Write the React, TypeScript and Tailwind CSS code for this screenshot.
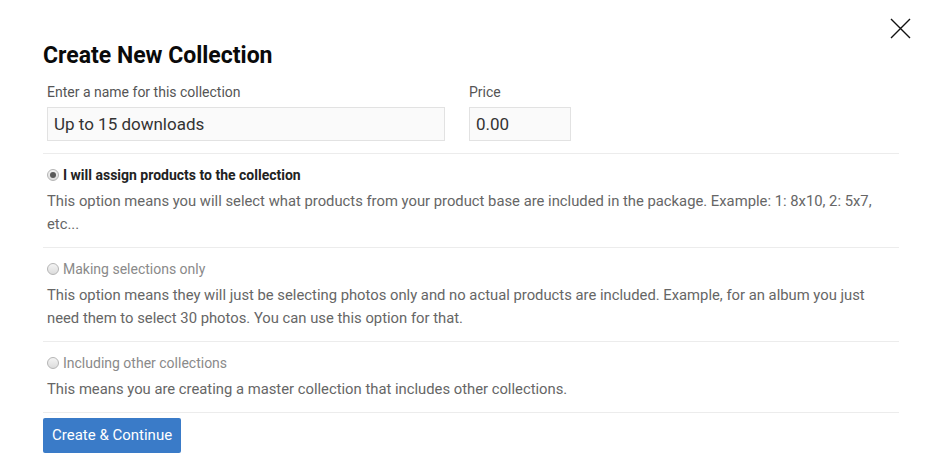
import React from "react";

function Radio({ checked }: { checked?: boolean }) {
  return (
    <span className="relative inline-flex h-[12px] w-[12px] shrink-0 items-center justify-center rounded-full border border-[#b5b5b5] bg-gradient-to-b from-[#f4f4f4] to-[#dcdcdc]">
      {checked && <span className="h-[6px] w-[6px] rounded-full bg-[#5a5a5a]" />}
    </span>
  );
}

function Option({
  label,
  desc,
  checked,
}: {
  label: string;
  desc: string;
  checked?: boolean;
}) {
  return (
    <div className="border-t border-[#ececec] pl-[4px] pt-[11px] pb-[11px]">
      <div className="flex h-[20px] items-center gap-[4px]">
        <Radio checked={checked} />
        <span
          className={
            checked
              ? "text-[14px] font-bold text-[#222]"
              : "text-[14px] text-[#8a8a8a]"
          }
        >
          {label}
        </span>
      </div>
      <p className="mt-[5px] text-[14.8px] leading-[23px] text-[#666]">{desc}</p>
    </div>
  );
}

export default function App() {
  return (
    <div
      className="relative h-[472px] w-[933px] bg-white"
      style={{ fontFamily: "Roboto, 'Liberation Sans', sans-serif" }}
    >
      <button className="absolute right-[22px] top-[18px] h-[21px] w-[21px] text-black">
        <svg viewBox="0 0 21 21" className="h-[21px] w-[21px]">
          <path d="M1 1 L20 20 M20 1 L1 20" stroke="#111" strokeWidth="1.4" fill="none" />
        </svg>
      </button>
      <div className="pl-[43px] pr-[34px] pt-[42px]">
        <h1 className="text-[23px] font-bold leading-[27px] text-[#0a0a0a]">Create New Collection</h1>
        <div className="mt-[15px] flex gap-[24px] pl-[4px] pb-[12px]">
          <div className="flex flex-col">
            <label className="text-[14px] leading-[17px] text-[#555]">Enter a name for this collection</label>
            <input
              readOnly
              value="Up to 15 downloads"
              className="mt-[6px] h-[34px] w-[398px] border border-[#e2e2e2] bg-[#fafafa] px-[6px] text-[17px] text-[#333] outline-none"
            />
          </div>
          <div className="flex flex-col">
            <label className="text-[14px] leading-[17px] text-[#555]">Price</label>
            <input
              readOnly
              value="0.00"
              className="mt-[6px] h-[34px] w-[102px] border border-[#e2e2e2] bg-[#fafafa] px-[6px] text-[17px] text-[#333] outline-none"
            />
          </div>
        </div>
        <Option
          checked
          label="I will assign products to the collection"
          desc="This option means you will select what products from your product base are included in the package. Example: 1: 8x10, 2: 5x7, etc..."
        />
        <Option
          label="Making selections only"
          desc="This option means they will just be selecting photos only and no actual products are included. Example, for an album you just need them to select 30 photos. You can use this option for that."
        />
        <Option
          label="Including other collections"
          desc="This means you are creating a master collection that includes other collections."
        />
        <div className="border-t border-[#ececec] pt-[5px]">
          <button className="h-[35px] rounded-[2px] bg-[#3a7bc8] px-[9px] text-[15px] text-white">
            Create &amp; Continue
          </button>
        </div>
      </div>
    </div>
  );
}
